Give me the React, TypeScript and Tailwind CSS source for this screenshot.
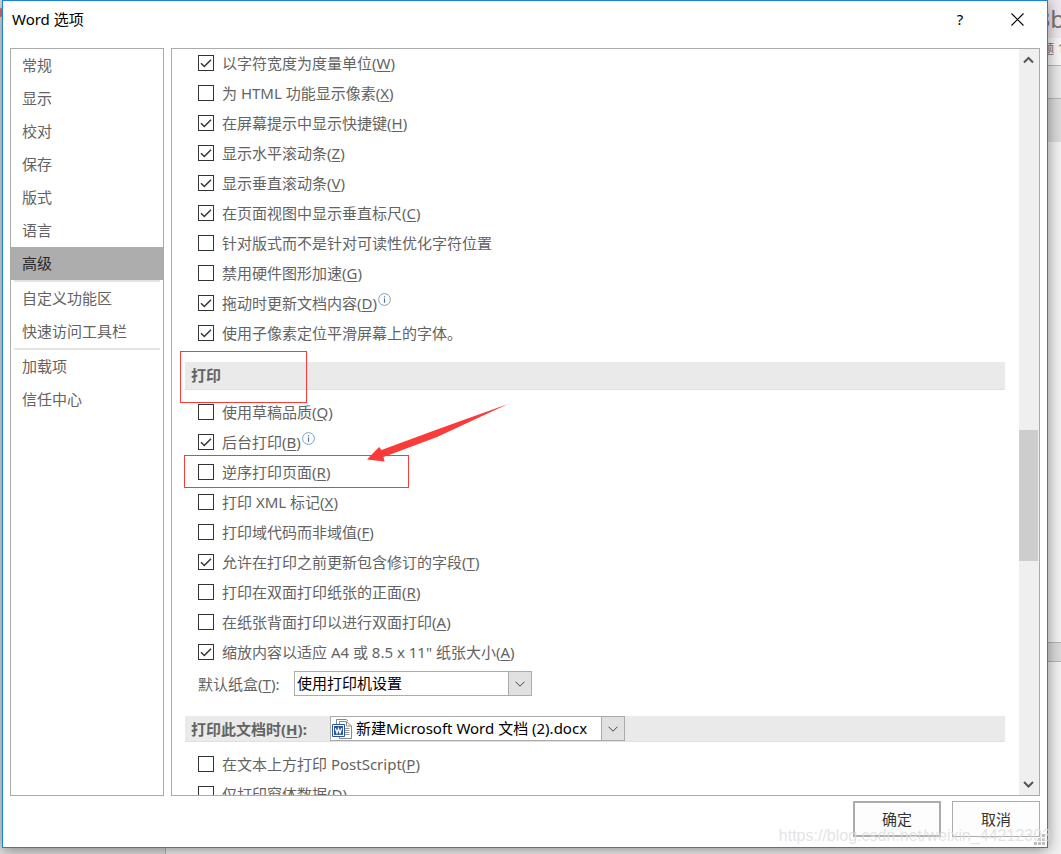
import { useState, type ReactNode } from 'react';

type Option = { label: string; accessKey?: string; checked?: boolean; info?: boolean };

const navGroups = [
  ['常规', '显示', '校对', '保存', '版式', '语言', '高级'],
  ['自定义功能区', '快速访问工具栏'],
  ['加载项', '信任中心'],
];

const displayOptions: Option[] = [
  { label: '以字符宽度为度量单位', accessKey: 'W', checked: true },
  { label: '为 HTML 功能显示像素', accessKey: 'X' },
  { label: '在屏幕提示中显示快捷键', accessKey: 'H', checked: true },
  { label: '显示水平滚动条', accessKey: 'Z', checked: true },
  { label: '显示垂直滚动条', accessKey: 'V', checked: true },
  { label: '在页面视图中显示垂直标尺', accessKey: 'C', checked: true },
  { label: '针对版式而不是针对可读性优化字符位置' },
  { label: '禁用硬件图形加速', accessKey: 'G' },
  { label: '拖动时更新文档内容', accessKey: 'D', checked: true, info: true },
  { label: '使用子像素定位平滑屏幕上的字体。', checked: true },
];

const printOptions: Option[] = [
  { label: '使用草稿品质', accessKey: 'Q' },
  { label: '后台打印', accessKey: 'B', checked: true, info: true },
  { label: '逆序打印页面', accessKey: 'R' },
  { label: '打印 XML 标记', accessKey: 'X' },
  { label: '打印域代码而非域值', accessKey: 'F' },
  { label: '允许在打印之前更新包含修订的字段', accessKey: 'T', checked: true },
  { label: '打印在双面打印纸张的正面', accessKey: 'R' },
  { label: '在纸张背面打印以进行双面打印', accessKey: 'A' },
  { label: '缩放内容以适应 A4 或 8.5 x 11" 纸张大小', accessKey: 'A', checked: true },
];

const documentOptions: Option[] = [
  { label: '在文本上方打印 PostScript', accessKey: 'P' },
  { label: '仅打印窗体数据', accessKey: 'D' },
];

function AccessKey({ children }: { children: ReactNode }) {
  return <>(<span className="underline underline-offset-2">{children}</span>)</>;
}

function InfoIcon() {
  return (
    <svg className="mb-2 h-[13px] w-[13px]" viewBox="0 0 13 13" fill="none" aria-hidden="true">
      <circle cx="6.5" cy="6.5" r="5.9" stroke="#7f9fc9" />
      <path d="M6.5 5.5v4.2M6.5 3.2v1.2" stroke="#4d6f9f" strokeWidth="1.2" />
    </svg>
  );
}

function CheckRow({ option, children }: { option: Option; children?: ReactNode }) {
  const [on, setOn] = useState(!!option.checked);
  return (
    <div className="relative flex h-[30px] items-center pl-[13px]">
      <label className="flex items-center gap-2">
        <span className="grid">
          <input
            type="checkbox"
            checked={on}
            onChange={() => setOn(!on)}
            className="peer col-start-1 row-start-1 h-4 w-4 appearance-none border border-[#333] bg-white"
          />
          <svg className="pointer-events-none invisible col-start-1 row-start-1 h-4 w-4 peer-checked:visible" viewBox="0 0 16 16" fill="none" aria-hidden="true">
            <path d="M3 8.2 6.3 11.5 13 4.8" stroke="#333" strokeWidth="1.5" />
          </svg>
        </span>
        <span className="whitespace-nowrap">
          {option.label}
          {option.accessKey && <AccessKey>{option.accessKey}</AccessKey>}
        </span>
      </label>
      {option.info && <span className="ml-px"><InfoIcon /></span>}
      {children}
    </div>
  );
}

function DropArrow() {
  return (
    <span className="pointer-events-none col-start-1 row-start-1 flex w-6 items-center justify-center justify-self-end border border-[#ababab] bg-[#e1e1e1]">
      <svg className="h-[6px] w-[10px]" viewBox="0 0 10 6" fill="none" aria-hidden="true">
        <path d="M.5.7 5 5.2 9.5.7" stroke="#444" />
      </svg>
    </span>
  );
}

function WordFileIcon() {
  return (
    <svg className="pointer-events-none col-start-1 row-start-1 ml-[2px] h-5 w-5 self-center" viewBox="0 0 20 20" fill="none" aria-hidden="true">
      <path d="M4.5 5V.5h10L16 2" stroke="#8a8a8a" />
      <path d="M7.5 2.5h7l5 4.5v12.500h-12z" fill="#fff" stroke="#8a8a8a" />
      <path d="M14.500 2.500V7h5" stroke="#8a8a8a" />
      <path d="M13 9.500h4.500M13 11.500h4.500M13 13.500h4.500M13 15.500h4.500" stroke="#9a9a9a" />
      <path d="M.5 5.500h12v12H.5z" fill="#fff" stroke="#2b579a" />
      <path d="M2 7h9v9H2z" fill="#2b579a" />
      <path d="M3.300 9.300 5 14l1.500-4.200L8 14l1.700-4.700" stroke="#fff" strokeWidth="1.3" />
    </svg>
  );
}

function Scrollbar() {
  return (
    <div className="flex w-5 shrink-0 flex-col bg-[#efefef]" aria-hidden="true">
      <svg className="h-5 w-5" viewBox="0 0 20 20" fill="none">
        <path d="M5 13.500 9.500 9l4.500 4.500" stroke="#555" strokeWidth="2" />
      </svg>
      <div className="grow-[361]" />
      <div className="mr-px grow-[131] bg-[#cdcdcd]" />
      <div className="grow-[214]" />
      <svg className="h-5 w-5" viewBox="0 0 20 20" fill="none">
        <path d="M5 7l4.500 4.500L14 7" stroke="#555" strokeWidth="2" />
      </svg>
    </div>
  );
}

// The document window that shows round the edges of the dialog
function Backdrop() {
  return (
    <div className="absolute inset-0 flex bg-[#f3f3f3] text-[#777]" aria-hidden="true">
      <div className="w-[166px] border-r border-[#b8b8b8] bg-[#e2e2e2]">
        <div className="mt-2 h-[9px] w-[3px] rounded-r bg-[#e8707c]" />
      </div>
      <div className="flex grow flex-col">
        <div className="flex h-[38px] items-center justify-end overflow-hidden bg-[#f0e8f0] text-2xl">
          <span className="-mr-1">Bb</span>
        </div>
        <div className="flex h-[27px] justify-end overflow-hidden bg-[#f8f8f8] text-[13px] whitespace-nowrap">
          <span className="-mr-1">标题 1</span>
        </div>
        <div className="h-[34px] border-y border-[#b8b8b8] bg-[#eaeaea]" />
        <div className="h-[43px] bg-[#dcdcdc]" />
        <div className="grow-[500]" />
        <div className="h-5 border-y border-[#b5b5b5] bg-[#dcdcdc]" />
        <div className="grow-[192]" />
      </div>
    </div>
  );
}

function Sidebar() {
  const [active, setActive] = useState('高级');
  return (
    <nav className="w-[154px] shrink-0 border border-[#ababab]">
      {navGroups.map((group, i) => (
        <div key={group[0]}>
          {i > 0 && <hr className="mx-[3px] h-[2px] border-0 bg-[#e3e3e3]" />}
          {group.map((name) => (
            <button
              key={name}
              type="button"
              onClick={() => setActive(name)}
              className={name === active
                ? 'block h-[33px] w-full bg-[#adadad] pb-[2px] pl-[11px] text-left text-[#262626]'
                : 'block h-[33px] w-full pb-[2px] pl-[11px] text-left'}
            >
              {name}
            </button>
          ))}
        </div>
      ))}
    </nav>
  );
}

export default function App() {
  return (
    <div className="relative flex h-screen overflow-hidden pr-[13px] pb-[6px] pl-[2px] font-['Noto_Sans','Noto_Sans_CJK_SC',sans-serif] text-[15px] leading-5 text-[#636363]">
      <Backdrop />
      <div role="dialog" aria-label="Word 选项" className="relative flex min-w-0 grow flex-col border border-[#1883d7] bg-white px-[7px] shadow-[0_2px_14px_rgba(0,0,0,0.45)]">
        <header className="flex h-[47px] shrink-0 items-start justify-between pt-2 text-black">
          <h1 className="pl-[2px]">Word 选项</h1>
          <div className="flex h-5 items-center gap-[43px] pr-4">
            <button type="button" aria-label="帮助" className="w-4">?</button>
            <button type="button" aria-label="关闭">
              <svg className="h-[13px] w-[13px]" viewBox="0 0 13 13" fill="none"><path d="M.5.5l12 12M12.500.5l-12 12" stroke="#000" strokeWidth="1.1" /></svg>
            </button>
          </div>
        </header>

        <div className="flex min-h-0 grow gap-[7px]">
          <Sidebar />
          <main className="flex min-w-0 grow overflow-hidden border border-[#ababab]">
            <div className="-mt-px min-w-0 grow overflow-hidden pr-[14px] pl-[13px]">
              {displayOptions.map((o) => <CheckRow key={o.label} option={o} />)}

              <div className="relative mt-[14px] mb-[7px] flex h-7 items-center border-b border-[#e0e0e0] bg-[#eaeaea] pl-[6px]">
                <h2 className="pb-[2px] font-bold">打印</h2>
                <div className="pointer-events-none absolute -top-[11px] -left-[5px] h-[52px] w-[127px] border border-[#fb3a3a]" />
              </div>
              {printOptions.map((o) => (
                <CheckRow key={o.label} option={o}>
                  {o.label === '逆序打印页面' && (
                    <>
                      <div className="pointer-events-none absolute -top-[2px] -left-px h-[33px] w-[225px] border border-[#fb3a3a]" />
                      <svg className="pointer-events-none absolute -top-[53px] left-[182px] h-[60px] w-[142px]" viewBox="0 0 142 60" aria-hidden="true">
                        <path d="M0 55.500 12 43 14.500 46 70 25.500 141 0 70 33 16.500 53 17.500 57.500Z" fill="#fb3a3a" />
                      </svg>
                    </>
                  )}
                </CheckRow>
              ))}

              <div className="mt-1 flex h-[25px] items-center pl-[13px]">
                <label htmlFor="tray" className="w-24 shrink-0 whitespace-nowrap">默认纸盒<AccessKey>T</AccessKey>:</label>
                <div className="grid h-[25px] w-[238px]">
                  <select id="tray" className="col-start-1 row-start-1 appearance-none border border-[#ababab] bg-white pb-[2px] pl-[2px] text-black">
                    <option>使用打印机设置</option>
                  </select>
                  <DropArrow />
                </div>
              </div>

              <div className="mt-5 mb-[7px] flex h-[26px] items-center border-b border-[#e0e0e0] bg-[#eaeaea] pl-[6px]">
                <label htmlFor="document" className="w-[139px] shrink-0 font-bold whitespace-nowrap">打印此文档时<AccessKey>H</AccessKey>:</label>
                <div className="grid h-[25px] w-[295px]">
                  <select id="document" className="col-start-1 row-start-1 appearance-none border border-[#ababab] bg-white pb-[2px] pl-[25px] text-black">
                    <option>新建Microsoft Word 文档 (2).docx</option>
                  </select>
                  <WordFileIcon />
                  <DropArrow />
                </div>
              </div>
              {documentOptions.map((o) => <CheckRow key={o.label} option={o} />)}
            </div>
            <Scrollbar />
          </main>
        </div>

        <footer className="flex h-[51px] shrink-0 justify-end gap-[11px] pt-[5px] text-[#333]">
          <button type="button" className="h-9 w-[88px] border-2 border-[#ababab] bg-[#fdfdfd]">确定</button>
          <button type="button" className="h-9 w-[88px] border border-[#ababab] bg-[#fdfdfd]">取消</button>
        </footer>
        <svg className="absolute right-[2px] bottom-[2px] h-[11px] w-[11px]" viewBox="0 0 11 11" fill="#bdbdbd" aria-hidden="true">
          <path d="M8 0h3v3H8zM4 4h3v3H4zM8 4h3v3H8zM0 8h3v3H0zM4 8h3v3H4zM8 8h3v3H8z" />
        </svg>
      </div>
      <p className="pointer-events-none absolute right-[10px] bottom-2 font-['Liberation_Sans',sans-serif] text-base leading-5 text-[#dcdcdc]/80">https://blog.csdn.net/weixin_44212303</p>
    </div>
  );
}
